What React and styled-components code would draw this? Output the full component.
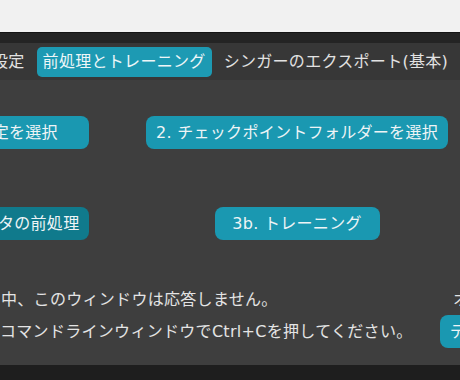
import { createGlobalStyle, styled } from "styled-components"

const GlobalStyle = createGlobalStyle`
    html, body {
        margin: 0;
        padding: 0;
        background: #f1f1f1;
    }
    body {
        font-family: "DejaVu Sans", "Noto Sans CJK JP", sans-serif;
        letter-spacing: 0.3px;
        overflow: hidden;
    }
`

const tabs = ["設定", "前処理とトレーニング", "シンガーのエクスポート(基本)"]

export default function App() {
    return (
        <>
            <GlobalStyle />
            <Page>
                <TitleArea />
                <Window>
                    <TopBand />
                    <TabBar>
                        {tabs.map((t, i) => (
                            <Tab key={t} $active={i === 1}>{t}</Tab>
                        ))}
                    </TabBar>
                    <Content>
                        <ButtonGrid>
                            <Cell $stretch>
                                <Button>1. 設定を選択</Button>
                            </Cell>
                            <Cell>
                                <Button>2. チェックポイントフォルダーを選択</Button>
                            </Cell>
                            <Cell $stretch>
                                <Button $pressed>3a. データの前処理</Button>
                            </Cell>
                            <Cell>
                                <Button>3b. トレーニング</Button>
                            </Cell>
                        </ButtonGrid>
                        <InfoGrid>
                            <Note $shift={1}>中、このウィンドウは応答しません。</Note>
                            <SideLabel>オプション</SideLabel>
                            <Note>コマンドラインウィンドウでCtrl+Cを押してください。</Note>
                            <SideCell>
                                <SideButton>データセットを開く</SideButton>
                            </SideCell>
                        </InfoGrid>
                    </Content>
                    <BottomBand />
                </Window>
            </Page>
        </>
    )
}

const Page = styled.div`
    width: 460px;
    height: 380px;
    display: flex;
    flex-direction: column;
    overflow: hidden;
`

const TitleArea = styled.div`
    height: 32px;
    flex: none;
    background: #f1f1f1;
`

const Window = styled.div`
    flex: 1;
    display: flex;
    flex-direction: column;
    background: #3e3e3e;
    overflow: hidden;
`

const TopBand = styled.div`
    height: 10px;
    flex: none;
    background: #242424;
    border-top: 1px solid #141414;
`

const TabBar = styled.div`
    height: 37px;
    flex: none;
    display: flex;
    align-items: center;
    gap: 6px;
    margin-left: -14px;
    background: #373737;
    white-space: nowrap;
`

const Tab = styled.div`
    height: 30px;
    line-height: 30px;
    padding: 0 6px;
    border-radius: 5px;
    font-size: 16px;
    color: ${p => (p.$active ? "#eef6f8" : "#e2e2e2")};
    background: ${p => (p.$active ? "#1d9ab3" : "transparent")};
`

const Content = styled.div`
    flex: 1;
    padding-top: 36px;
    display: flex;
    flex-direction: column;
`

const ButtonGrid = styled.div`
    display: grid;
    grid-template-columns: 165px 300px;
    column-gap: 58px;
    row-gap: 58px;
    margin-left: -76px;
`

const Cell = styled.div`
    display: flex;
    justify-content: center;
    & > * {
        flex: ${p => (p.$stretch ? "1" : "none")};
    }
`

const Button = styled.div`
    box-sizing: border-box;
    min-width: 165px;
    height: 33px;
    line-height: 33px;
    padding: 0 10px;
    border-radius: 8px;
    font-size: 16px;
    text-align: center;
    white-space: nowrap;
    color: #eef4f6;
    background: ${p => (p.$pressed ? "#107a8c" : "#1a98b1")};
`

const SideButton = styled(Button)`
    min-width: 0;
`

const InfoGrid = styled.div`
    display: grid;
    grid-template-columns: 440px 200px;
    grid-template-rows: 24px 33px;
    row-gap: 3px;
    margin-top: 48px;
    align-items: center;
`

const Note = styled.div`
    font-size: 16px;
    line-height: 24px;
    color: #e4e4e4;
    white-space: nowrap;
    padding-left: ${p => p.$shift || 0}px;
`

const SideLabel = styled(Note)`
    padding-left: 13px;
`

const SideCell = styled.div`
    display: flex;
`

const BottomBand = styled.div`
    height: 15px;
    flex: none;
    background: #1e1e1e;
`
